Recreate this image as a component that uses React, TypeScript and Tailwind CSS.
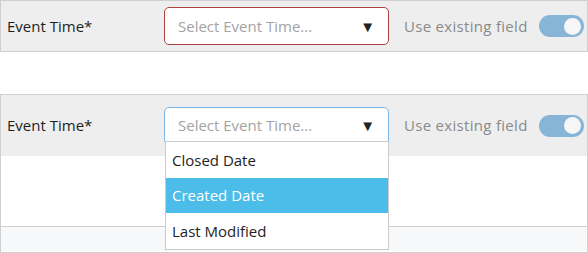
import React from 'react'

const font = { fontFamily: '"Open Sans", "Noto Sans", sans-serif' }

function Toggle() {
  return (
    <div className="relative h-[22px] w-[45px] rounded-full bg-[#86b5d8]">
      <div className="absolute right-[3px] top-[2.5px] h-[17px] w-[17px] rounded-full bg-[#f6f6f6]"></div>
    </div>
  )
}

function FieldRow({ focused }: { focused?: boolean }) {
  return (
    <div className="flex h-full items-center pr-[3px]">
      <div className="w-[163px] pl-[6px] text-[15px] text-[#1e1e1e]">Event Time*</div>
      <div
        className={
          'flex h-[38px] w-[225px] items-center justify-between rounded-[5px] border bg-white pl-[13px] pr-[13px] ' +
          (focused ? 'border-[#7fb8e6]' : 'border-[#a94442]')
        }
      >
        <span className="text-[15px] text-[#a3a3a3]">Select Event Time...</span>
        <span className="text-[15px] leading-none text-[#222]">▼</span>
      </div>
      <div className="ml-[15px] text-[15px] tracking-[0.3px] text-[#8a8a8a]">Use existing field</div>
      <div className="ml-auto">
        <Toggle />
      </div>
    </div>
  )
}

export default function App() {
  return (
    <div className="w-[588px] h-[253px] bg-white" style={font}>
      <div className="h-[52px] border border-[#cfcfcf] bg-[#eeeeee]">
        <FieldRow />
      </div>
      <div className="h-[42px]"></div>
      <div className="relative h-[159px] border border-[#cfcfcf]">
        <div className="h-[61px] bg-[#eeeeee]">
          <FieldRow focused />
        </div>
        <div className="h-[71px] border-b border-[#cfcfcf]"></div>
        <div className="h-[24px] bg-[#f7f8fa]"></div>

        <div className="absolute left-[164px] top-[46px] w-[224px] border border-[#cccccc] bg-white text-[15px] text-[#1e1e1e]">
          <div className="flex h-[36px] items-center pl-[6px]">Closed Date</div>
          <div className="flex h-[35px] items-center bg-[#4bbde8] pl-[6px] text-white">Created Date</div>
          <div className="flex h-[36px] items-center pl-[6px]">Last Modified</div>
        </div>
      </div>
    </div>
  )
}
